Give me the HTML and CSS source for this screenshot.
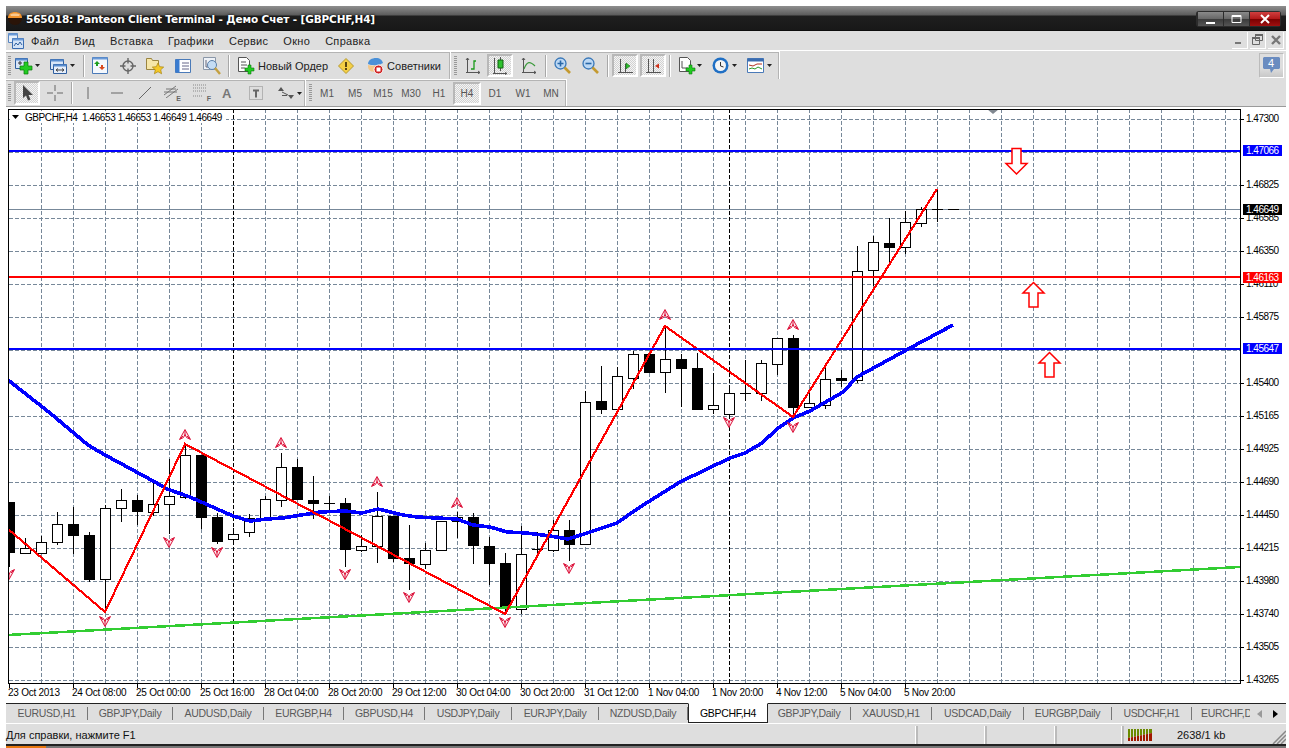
FILE: index.html
```html
<!DOCTYPE html>
<html lang="ru">
<head>
<meta charset="utf-8">
<title>565018: Panteon Client Terminal</title>
<link rel="stylesheet" href="styles.css">
</head>
<body>
<div class="window">
  <header class="titlebar">
    <svg class="appicon" width="16" height="16" viewBox="0 0 16 16"><path d="M1 7C1 3 4 1 8 1s7 2 7 6z" fill="#f0922c"/><path d="M3 3.500C5 2 11 2 13 3.500L12 5H4z" fill="#f8c890"/><path d="M1 7h14c0 4-3 7-7 7s-7-3-7-7z" fill="#2a1408"/></svg>
    <span class="titletext">565018: Panteon Client Terminal - Демо Счет - [GBPCHF,H4]</span>
    <div class="winctl">
      <span class="wbtn"><svg width="25" height="14" viewBox="0 0 25 14"><path d="M8 10h9v2H8z" fill="#fff"/></svg></span>
      <span class="wbtn"><svg width="25" height="14" viewBox="0 0 25 14"><path d="M8 3.500h9v7H8z" fill="none" stroke="#fff"/><path d="M8 3h9v2H8z" fill="#fff"/></svg></span>
      <span class="wbtn wclose"><svg width="30" height="14" viewBox="0 0 30 14"><path d="M11 3l8 8M19 3l-8 8" stroke="#fff" stroke-width="2"/></svg></span>
    </div>
  </header>

  <nav class="menubar">
    <svg class="menuicon" width="16" height="16" viewBox="0 0 16 16"><path d="M.5.500h9v9h-9z" fill="#e8f0fa" stroke="#5a86c0"/><path d="M4.500 5.500h11v10h-11z" fill="#d2e2f6" stroke="#3a6cb0"/><path d="M.5.500h9v2h-9zM4.500 5.500h11v2h-11z" fill="#6a9ad8"/><path d="M6 13l2-3 2 2 2-3 2 3" fill="none" stroke="#2f5f9f"/></svg>
    <span class="menuitem">Файл</span>
    <span class="menuitem">Вид</span>
    <span class="menuitem">Вставка</span>
    <span class="menuitem">Графики</span>
    <span class="menuitem">Сервис</span>
    <span class="menuitem">Окно</span>
    <span class="menuitem">Справка</span>
    <div class="mdi">
      <span class="mdibtn"><svg width="14" height="14" viewBox="0 0 14 14"><path d="M2 9h6v2H2z" fill="#777"/></svg></span>
      <span class="mdibtn"><svg width="14" height="14" viewBox="0 0 14 14"><path d="M4.500 1.500h7v6h-7zM1.500 4.500h7v7h-7z" fill="#dedede" stroke="#666"/><path d="M4 1h8v2H4zM1 4h8v2H1z" fill="#666"/></svg></span>
      <span class="mdibtn"><svg width="14" height="14" viewBox="0 0 14 14"><path d="M3 3l8 8M11 3l-8 8" stroke="#777" stroke-width="2.400"/></svg></span>
    </div>
  </nav>

  <div class="toolrow row1">
    <div class="band band1">
      <span class="grip"></span>
      <svg class="m4" width="18" height="18" viewBox="0 0 18 18"><path d="M.5 1.500h12v10H.5z" fill="#d8e6f8" stroke="#2f5f9f"/><path d="M.5 1.500h12v2H.5z" fill="#5a8ed0"/><path d="M3 6h4M5 4v4" stroke="#333"/><path d="M9 5h4v4h4v4h-4v4H9v-4H5V9h4z" fill="#22cc22" stroke="#0a7a0a" stroke-width=".7"/></svg>
      <svg class="m2 caret" width="5" height="3" viewBox="0 0 5 3"><path d="M0 0h5L2.500 3z"/></svg>
      <svg class="m10" width="17" height="18" viewBox="0 0 17 18"><path d="M.5 2.500h13v10H.5z" fill="#d8e6f8" stroke="#2f5f9f"/><path d="M.5 2.500h13v2H.5z" fill="#5a8ed0"/><path d="M3.500 7.500h13v9h-13z" fill="#e6eefa" stroke="#2f5f9f"/><path d="M3.500 7.500h13v2h-13z" fill="#5a8ed0"/><path d="M6 13h8M6 13l2-1.500M6 13l2 1.500M14 13l-2-1.500M14 13l-2 1.500" stroke="#444" fill="none"/></svg>
      <svg class="m3 caret" width="5" height="3" viewBox="0 0 5 3"><path d="M0 0h5L2.500 3z"/></svg>
      <span class="sep m8"></span>
      <svg class="m8" width="16" height="17" viewBox="0 0 16 17"><path d="M.5.500h15v16H.5z" fill="#f4f8fd" stroke="#4a7ab8"/><path d="M.5.500h15v2H.5z" fill="#6a9ad8"/><path d="M5 4l3 3H6v2H4V7H2z" fill="#1e9e1e"/><path d="M10 13l-3-3h2V8h2v2h2z" fill="#d84a20"/></svg>
      <svg class="m12" width="16" height="16" viewBox="0 0 16 16"><circle cx="8" cy="8" r="5" fill="none" stroke="#666" stroke-width="1.400"/><path d="M8 0v5.500M8 10.500V16M0 8h5.500M10.500 8H16" stroke="#666" stroke-width="1.400"/></svg>
      <svg class="m10" width="18" height="18" viewBox="0 0 18 18"><path d="M.5 1.500h5l1 2h6v9h-12z" fill="#f6e6a8" stroke="#9a8440"/><path d="M12 6l1.700 3.700 4 .4-3 2.700.9 4-3.600-2.100-3.600 2.100.9-4-3-2.700 4-.4z" fill="#f4c828" stroke="#a88410" stroke-width=".7"/></svg>
      <svg class="m11" width="16" height="16" viewBox="0 0 16 16"><path d="M.5 1.500h15v13H.5z" fill="#fff" stroke="#4a7ab8"/><path d="M.5 1.500h4v13h-4z" fill="#3a7cd0"/><path d="M7 5h7M7 8h7M7 11h7" stroke="#668"/></svg>
      <svg class="m12" width="18" height="18" viewBox="0 0 18 18"><path d="M.5.500h12v12H.5z" fill="#eef2f8" stroke="#8a97a8"/><path d="M3 3v7h7" stroke="#667" fill="none"/><circle cx="9" cy="8" r="4.500" fill="#c4dcf4" stroke="#5a7fa8"/><path d="M12 11l5 6" stroke="#c4a040" stroke-width="2.400"/></svg>
      <span class="sep m7"></span>
      <svg class="m9" width="17" height="18" viewBox="0 0 17 18"><path d="M.5.500h8l3 3v11H.5z" fill="#fff" stroke="#555"/><path d="M3 5h5M3 8h6M3 11h4" stroke="#555"/><path d="M10 8h3v3h3v3h-3v3h-3v-3H7v-3h3z" fill="#22cc22" stroke="#0a7a0a" stroke-width=".6"/></svg>
      <span class="tbtext m3">Новый Ордер</span>
      <svg class="m10" width="16" height="16" viewBox="0 0 16 16"><path d="M8 .5L15.500 8 8 15.500.5 8z" fill="#f5cf45" stroke="#b59a30"/><path d="M7 4h2v5H7zM7 10h2v2H7z" fill="#5a4510"/></svg>
      <svg class="m11" width="19" height="18" viewBox="0 0 19 18"><path d="M3 7c0-4 4-6 8-6s6 2 7 5l-3 1.500c-3 1-9 1-12-.5z" fill="#4a90d8"/><path d="M3 8c3 1 9 1 12-.5l1 3c-2 6-12 6-13-.5z" fill="#f3c78a"/><circle cx="13.500" cy="12.500" r="4.500" fill="#d02020" stroke="#fff"/><path d="M11.500 10.500h4v4h-4z" fill="#fff"/></svg>
      <span class="tbtext m3">Советники</span>
    </div>
    <div class="band band2">
      <span class="grip"></span>
      <svg class="m8" width="16" height="17" viewBox="0 0 16 17"><path d="M2.500 1v14M1 15.500h14M1 3l1.500-2L4 3M13 14l2 1.500-2 1.500" stroke="#555" fill="none"/><path d="M6 12h3V4h2" stroke="#1a9a1a" stroke-width="1.300" fill="none"/></svg>
      <span class="pressed m6 w26"><svg width="14" height="18" viewBox="0 0 14 18"><path d="M1.500 1v15M0 16.500h14M12 15.500l2 1-2 1" stroke="#555" fill="none"/><path d="M7.500 0v14" stroke="#555"/><path d="M5 3h5v8H5z" fill="#2ec22e" stroke="#106010"/></svg></span>
      <svg class="m8" width="16" height="17" viewBox="0 0 16 17"><path d="M2.500 1v14M1 15.500h14M1 3l1.500-2L4 3M13 14l2 1.500-2 1.500" stroke="#555" fill="none"/><path d="M3 12c3-8 6-8 11-3" stroke="#3a9a3a" stroke-width="1.200" fill="none"/></svg>
      <span class="sep m8"></span>
      <svg class="m8" width="17" height="17" viewBox="0 0 17 17"><circle cx="6.500" cy="6.500" r="5.500" fill="#bcd8f4" stroke="#3a78b8" stroke-width="1.300"/><path d="M3.500 6.500h6M6.500 3.500v6" stroke="#2868a8" stroke-width="1.600"/><path d="M10.500 10.500l5.500 5.500" stroke="#c49a30" stroke-width="2.600"/></svg>
      <svg class="m11" width="17" height="17" viewBox="0 0 17 17"><circle cx="6.500" cy="6.500" r="5.500" fill="#bcd8f4" stroke="#3a78b8" stroke-width="1.300"/><path d="M3.500 6.500h6" stroke="#2868a8" stroke-width="1.600"/><path d="M10.500 10.500l5.500 5.500" stroke="#c49a30" stroke-width="2.600"/></svg>
      <span class="sep m8"></span>
      <span class="pressed m4 w26"><svg width="15" height="16" viewBox="0 0 15 16"><path d="M2.500 1v13M0 14.500h15M7.500 6v8" stroke="#555" fill="none"/><path d="M8 5l4 3-4 3z" fill="#2ec22e" stroke="#107010" stroke-width=".6"/></svg></span>
      <span class="pressed m2 w26"><svg width="15" height="16" viewBox="0 0 15 16"><path d="M2.500 1v13M0 14.500h15M7.500 1v13" stroke="#555" fill="none"/><path d="M9 8l4-2.500v5z" fill="#d03018"/></svg></span>
      <span class="sep m3"></span>
      <svg class="m9" width="17" height="18" viewBox="0 0 17 18"><path d="M.5.500h8l3 3v11H.5z" fill="#fff" stroke="#555"/><path d="M3 4v7h6" stroke="#555" fill="none"/><path d="M10 8h3v3h3v3h-3v3h-3v-3H7v-3h3z" fill="#22cc22" stroke="#0a7a0a" stroke-width=".6"/></svg>
      <svg class="m1 caret" width="5" height="3" viewBox="0 0 5 3"><path d="M0 0h5L2.500 3z"/></svg>
      <svg class="m10" width="17" height="17" viewBox="0 0 17 17"><circle cx="8.500" cy="8.500" r="8" fill="#1f6fc4"/><circle cx="8.500" cy="8.500" r="5.500" fill="#f4f4f4"/><path d="M8.500 5v4l3 1" stroke="#333" fill="none"/></svg>
      <svg class="m3 caret" width="5" height="3" viewBox="0 0 5 3"><path d="M0 0h5L2.500 3z"/></svg>
      <svg class="m10" width="17" height="15" viewBox="0 0 17 15"><path d="M.5.500h16v14H.5z" fill="#fff" stroke="#4a7ab8"/><path d="M.5.500h16v3H.5z" fill="#3a6cb0"/><path d="M2 7l4 1 4-2 5 0" stroke="#b03020" fill="none"/><path d="M2 11l3-1 3 1 3-2 4 2" stroke="#2a9a2a" fill="none"/></svg>
      <svg class="m3 caret" width="5" height="3" viewBox="0 0 5 3"><path d="M0 0h5L2.500 3z"/></svg>
    </div>
    <span class="notify"><svg width="17" height="17" viewBox="0 0 17 17"><path d="M1 0h15l1 1v10l-1 1h-5l-3 4-1-4H1l-1-1V1z" fill="#6a8cc0"/></svg><b class="notifynum">4</b></span>
  </div>

  <div class="toolrow row2">
    <div class="band band3">
      <span class="grip small"></span>
      <span class="pressed m3 w26 h26"><svg width="11" height="16" viewBox="0 0 11 16"><path d="M1 0v13l3-2.500 2 5 2.500-1-2-4.500H11z" fill="#444"/></svg></span>
      <svg class="m7" width="16" height="16" viewBox="0 0 16 16"><path d="M8 0v6M8 10v6M0 8h6M10 8h6" stroke="#666"/></svg>
      <span class="sep m8"></span>
      <svg class="m11" width="10" height="14" viewBox="0 0 10 14"><path d="M5 1v12" stroke="#666"/></svg>
      <svg class="m17" width="14" height="4" viewBox="0 0 14 4"><path d="M1 2h12" stroke="#666"/></svg>
      <svg class="m14" width="14" height="14" viewBox="0 0 14 14"><path d="M1 13L13 1" stroke="#666"/></svg>
      <span class="drawtool m11"><svg width="16" height="14" viewBox="0 0 16 14"><path d="M1 11l12-9M3 14l12-9M1 8h13M3 5h10" stroke="#777" fill="none"/></svg><i class="sub">E</i></span>
      <span class="drawtool m12"><svg width="14" height="14" viewBox="0 0 14 14"><path d="M0 1h14M0 4h14M0 7h14M0 12h9" stroke="#888" stroke-dasharray="1 1"/></svg><i class="sub">F</i></span>
      <span class="glyph m11">A</span>
      <svg class="m16" width="14" height="14" viewBox="0 0 14 14"><path d="M.5.500h13v13H.5z" fill="none" stroke="#888" stroke-dasharray="1 1"/><path d="M4 3.500h6v2H8v6H6v-6H4z" fill="#666"/></svg>
      <svg class="m14" width="18" height="14" viewBox="0 0 18 14"><path d="M1 5l3-4 3 4zM5 9h5v1H5zM11 9l3 4 3-4z" fill="#555"/><path d="M5 6l6 3" stroke="#555"/></svg>
      <svg class="m2 caret" width="5" height="3" viewBox="0 0 5 3"><path d="M0 0h5L2.500 3z"/></svg>
    </div>
    <div class="band band4">
      <span class="grip small"></span>
      <span class="tf">M1</span><span class="tf">M5</span><span class="tf">M15</span><span class="tf">M30</span><span class="tf">H1</span><span class="tf active">H4</span><span class="tf">D1</span><span class="tf">W1</span><span class="tf">MN</span>
    </div>
  </div>
  <div class="toolend"></div>

  <main class="chartarea">
    <svg class="chart" width="1280" height="596" viewBox="6 107 1280 596">
      <defs>
        <clipPath id="plot"><rect x="9" y="109" width="1231" height="574"/></clipPath>
        <symbol id="fup" viewBox="-7 -7 14 14" overflow="visible"><path d="M0-5.500L5.500 4.500 1.500 2.500 0-.5-1.500 2.500-5.500 4.500Z" fill="#fde8ec" stroke="#dc143c"/><path d="M0-5V0M-2 1l-3 3M2 1l3 3" stroke="#dc143c" fill="none"/></symbol>
        <symbol id="fdn" viewBox="-7 -7 14 14" overflow="visible"><path d="M0 5.500L5.500-4.500 1.500-2.500 0 .5-1.500-2.500-5.500-4.500Z" fill="#fde8ec" stroke="#dc143c"/><path d="M0 5V0M-2-1l-3-3M2-1l3-3" stroke="#dc143c" fill="none"/></symbol>
      </defs>
      <g clip-path="url(#plot)">
        <path class="grid" d="M9 119.500H1240M9 152.500H1240M9 185.500H1240M9 218.500H1240M9 251.500H1240M9 284.500H1240M9 317.500H1240M9 350.500H1240M9 383.500H1240M9 416.500H1240M9 449.500H1240M9 482.500H1240M9 515.500H1240M9 548.500H1240M9 581.500H1240M9 614.500H1240M9 647.500H1240M9 680.500H1240"/>
        <path class="grid" d="M41.500 109V683M73.500 109V683M105.500 109V683M137.500 109V683M169.500 109V683M201.500 109V683M265.500 109V683M297.500 109V683M329.500 109V683M361.500 109V683M393.500 109V683M425.500 109V683M457.500 109V683M489.500 109V683M521.500 109V683M553.500 109V683M585.500 109V683M617.500 109V683M649.500 109V683M681.500 109V683M713.500 109V683M745.500 109V683M777.500 109V683M809.500 109V683M841.500 109V683M873.500 109V683M905.500 109V683M937.500 109V683M969.500 109V683M1001.500 109V683M1033.500 109V683M1065.500 109V683M1097.500 109V683M1129.500 109V683M1161.500 109V683M1193.500 109V683M1225.500 109V683"/>
        <path class="sepline" d="M233.500 109V683M729.500 109V683"/>
        <path class="priceline" d="M9 209.500H1240"/>
        <path class="wick" d="M9.500 502V567M25.500 538V554M41.500 536V553M57.500 512V545M73.500 507V554M89.500 532V582M105.500 505V612M121.500 489V522M137.500 495V525M153.500 482V516M169.500 459V534M185.500 445V499M201.500 455V529M217.500 513V544M233.500 528V543M249.500 514V537M265.500 496V519M281.500 453V507M297.500 459V500M313.500 476V519M329.500 496V510M324 503.500H335M345.500 498V567M361.500 535V552M377.500 492V563M393.500 516V562M409.500 525V590M425.500 543V569M441.500 521V551M457.500 512V538M473.500 513V564M489.500 537V585M505.500 553V613M521.500 526V614M537.500 532V553M532 549.500H543M553.500 520V552M569.500 520V561M585.500 391V544M601.500 366V414M617.500 367V409M633.500 351V389M649.500 354V373M665.500 326V393M681.500 354V407M697.500 353V410M713.500 373V414M729.500 385V418M745.500 360V401M740 393.500H751M761.500 360V401M777.500 338V375M793.500 335V417M809.500 393V407M825.500 368V409M841.500 370V387M857.500 246V383M873.500 236V286M889.500 218V262M905.500 211V254M921.500 207V227M937.500 189V222M932 209.500H943M948 209.500H959"/>
        <path class="bodyup" d="M20.500 548.500h10v5h-10zM36.500 542.500h10v11h-10zM52.500 524.500h10v18h-10zM100.500 508.500h10v71h-10zM116.500 500.500h10v8h-10zM148.500 504.500h10v8h-10zM164.500 496.500h10v8h-10zM180.500 455.500h10v42h-10zM228.500 534.500h10v5h-10zM244.500 518.500h10v14h-10zM260.500 499.500h10v20h-10zM276.500 467.500h10v33h-10zM356.500 546.500h10v4h-10zM372.500 516.500h10v30h-10zM420.500 550.500h10v14h-10zM436.500 521.500h10v29h-10zM452.500 517.500h10v4h-10zM516.500 554.500h10v55h-10zM548.500 530.500h10v20h-10zM580.500 402.500h10v142h-10zM612.500 376.500h10v33h-10zM628.500 354.500h10v24h-10zM660.500 359.500h10v13h-10zM708.500 405.500h10v4h-10zM724.500 393.500h10v21h-10zM756.500 363.500h10v30h-10zM772.500 338.500h10v26h-10zM804.500 403.500h10v4h-10zM820.500 379.500h10v26h-10zM852.500 271.500h10v109h-10zM868.500 242.500h10v28h-10zM900.500 222.500h10v25h-10zM916.500 209.500h10v14h-10z"/>
        <path class="bodydn" d="M4 502h11v51H4zM68 524h11v12H68zM84 535h11v45H84zM132 500h11v12h-11zM196 455h11v63h-11zM212 517h11v25h-11zM292 467h11v33h-11zM308 500h11v4h-11zM340 503h11v47h-11zM388 516h11v43h-11zM404 558h11v6h-11zM468 517h11v29h-11zM484 546h11v18h-11zM500 563h11v45h-11zM564 530h11v15h-11zM596 401h11v9h-11zM644 354h11v19h-11zM676 359h11v10h-11zM692 368h11v42h-11zM788 338h11v70h-11zM836 378h11v3h-11zM884 243h11v5h-11z"/>
        <polyline class="trend" points="8,635 1240,567"/>
        <polyline class="ma" points="8,380 50,413 88,445 105,455 155,482 167,489 190,497 233,516 250,521 267,519 283,518 320,512 345,511 362,513 378,509 403,515 417,517 457,519 473,525 490,527 507,532 527,533 550,536 568,539 587,533 617,523 640,507 680,482 705,470 730,458 745,453 762,443 777,429 793,418 810,411 843,392 857,377 910,348 953,325"/>
        <polyline class="zig" points="8,529 105,612 185,444 505,614 665,326 793,417 937,189"/>
        <path class="hblue" d="M9 151H1240M9 349H1240"/>
        <path class="hred" d="M9 277H1240"/>
        <path class="bigarrow" d="M1012 148.500h9v15h6l-10.500 10.500L1006 163.500h6z"/>
        <path class="bigarrow" d="M1033.500 282.500l10.500 10.500h-6v14h-9v-14h-6z"/>
        <path class="bigarrow" d="M1049.500 352.500l10.500 10.500h-6v14h-9v-14h-6z"/>
        <use href="#fup" x="178" y="428" width="14" height="14"/><use href="#fup" x="274" y="436" width="14" height="14"/><use href="#fup" x="370" y="475" width="14" height="14"/><use href="#fup" x="450" y="496" width="14" height="14"/><use href="#fup" x="658" y="308" width="14" height="14"/><use href="#fup" x="786" y="318" width="14" height="14"/>
        <use href="#fdn" x="2" y="567" width="14" height="14"/><use href="#fdn" x="98" y="614" width="14" height="14"/><use href="#fdn" x="162" y="535" width="14" height="14"/><use href="#fdn" x="210" y="545" width="14" height="14"/><use href="#fdn" x="338" y="567" width="14" height="14"/><use href="#fdn" x="402" y="590" width="14" height="14"/><use href="#fdn" x="498" y="615" width="14" height="14"/><use href="#fdn" x="562" y="561" width="14" height="14"/><use href="#fdn" x="722" y="415" width="14" height="14"/><use href="#fdn" x="786" y="420" width="14" height="14"/>
        <path class="marker" d="M987 109h12l-6 5z"/>
      </g>
      <rect class="headbg" x="10" y="111" width="216" height="12"/>
      <path d="M12 115h7l-3.500 4z" fill="#000"/>
      <text class="lab head" x="25" y="121">GBPCHF,H4&#160; 1.46653 1.46653 1.46649 1.46649</text>
      <path class="frame" d="M8.500 109.500H1240.500V683.500H8.500z"/>
      <path class="tick" d="M1241 119.500h3M1241 185.500h3M1241 218.500h3M1241 251.500h3M1241 284.500h3M1241 317.500h3M1241 383.500h3M1241 416.500h3M1241 449.500h3M1241 482.500h3M1241 515.500h3M1241 548.500h3M1241 581.500h3M1241 614.500h3M1241 647.500h3M1241 680.500h3M9.500 684v4M73.500 684v4M137.500 684v4M201.500 684v4M265.500 684v4M329.500 684v4M393.500 684v4M457.500 684v4M521.500 684v4M585.500 684v4M649.500 684v4M713.500 684v4M777.500 684v4M841.500 684v4M905.500 684v4"/>
      <g class="lab prices">
        <text x="1246" y="122">1.47300</text><text x="1246" y="188">1.46825</text><text x="1246" y="221">1.46585</text><text x="1246" y="254">1.46350</text><text x="1246" y="287">1.46110</text><text x="1246" y="320">1.45875</text><text x="1246" y="386">1.45400</text><text x="1246" y="419">1.45165</text><text x="1246" y="452">1.44925</text><text x="1246" y="485">1.44690</text><text x="1246" y="518">1.44450</text><text x="1246" y="551">1.44215</text><text x="1246" y="584">1.43980</text><text x="1246" y="617">1.43740</text><text x="1246" y="650">1.43505</text><text x="1246" y="683">1.43265</text>
      </g>
      <g class="lab dates">
        <text x="8" y="696">23 Oct 2013</text><text x="72" y="696">24 Oct 08:00</text><text x="136" y="696">25 Oct 00:00</text><text x="200" y="696">25 Oct 16:00</text><text x="264" y="696">28 Oct 04:00</text><text x="328" y="696">28 Oct 20:00</text><text x="392" y="696">29 Oct 12:00</text><text x="456" y="696">30 Oct 04:00</text><text x="520" y="696">30 Oct 20:00</text><text x="584" y="696">31 Oct 12:00</text><text x="648" y="696">1 Nov 04:00</text><text x="712" y="696">1 Nov 20:00</text><text x="776" y="696">4 Nov 12:00</text><text x="840" y="696">5 Nov 04:00</text><text x="904" y="696">5 Nov 20:00</text>
      </g>
      <rect class="tagblue" x="1243" y="145" width="39" height="11"/><rect class="tagblack" x="1243" y="204" width="39" height="11"/><rect class="tagred" x="1243" y="272" width="39" height="11"/><rect class="tagblue" x="1243" y="343" width="39" height="11"/>
      <g class="tagtext prices">
        <text x="1246" y="154">1.47066</text><text x="1246" y="213">1.46649</text><text x="1246" y="281">1.46163</text><text x="1246" y="352">1.45647</text>
      </g>
    </svg>
  </main>

  <div class="tabs">
    <span class="tab">EURUSD,H1</span><span class="tab">GBPJPY,Daily</span><span class="tab">AUDUSD,Daily</span><span class="tab">EURGBP,H4</span><span class="tab">GBPUSD,H4</span><span class="tab">USDJPY,Daily</span><span class="tab">EURJPY,Daily</span><span class="tab">NZDUSD,Daily</span><span class="tab current">GBPCHF,H4</span><span class="tab">GBPJPY,Daily</span><span class="tab">XAUUSD,H1</span><span class="tab">USDCAD,Daily</span><span class="tab">EURGBP,Daily</span><span class="tab">USDCHF,H1</span><span class="tab last">EURCHF,Daily</span>
    <span class="tabnav"><svg width="5" height="8" viewBox="0 0 5 8"><path d="M5 0v8L0 4z" fill="#999"/></svg><svg width="5" height="8" viewBox="0 0 5 8"><path d="M0 0v8l5-4z" fill="#000"/></svg></span>
  </div>

  <footer class="status">
    <span class="cell">Для справки, нажмите F1</span>
    <span class="cell"></span><span class="cell"></span><span class="cell"></span>
    <span class="cell conn"><svg width="24" height="12" viewBox="0 0 24 12"><path d="M0 0h24v4L0 9z" fill="#6a8a00"/><path d="M0 9L24 4v8H0z" fill="#a01800"/><path d="M2.500 0v12M5.500 0v12M8.500 0v12M11.500 0v12M14.500 0v12M17.500 0v12M20.500 0v12" stroke="#dedede"/></svg></span>
    <span class="cell traffic">2638/1 kb</span>
    <svg class="sizegrip" width="15" height="15" viewBox="0 0 15 15"><path d="M15 2L2 15M15 6L6 15M15 10L10 15" stroke="#888" stroke-width="1.500"/></svg>
  </footer>
  <div class="edge"><span class="edgeglow"></span></div>
</div>
</body>
</html>
```
FILE: styles.css
```css
* { box-sizing: border-box; }
html, body { margin: 0; padding: 0; background: #fff; }
body { width: 1289px; height: 748px; overflow: hidden; font-family: "Liberation Sans", Arial, sans-serif; font-size: 11px; color: #222; }
.window { display: flex; flex-direction: column; width: 1280px; height: 742px; margin: 6px 0 0 6px; background: #dedede; }

.titlebar { display: flex; align-items: center; height: 25px; flex: none; padding-left: 1px; background: linear-gradient(#8e8e8e 0, #5c5c5c 9px, #1f1f1f 10px, #181818 24px, #000 25px); }
.appicon { flex: none; }
.titletext { margin-left: 3px; color: #fff; font-family: "DejaVu Sans", sans-serif; font-weight: 700; font-size: 10.500px; letter-spacing: -.13px; text-shadow: 0 0 3px #000; white-space: nowrap; }
.winctl { display: flex; margin-left: auto; margin-right: 5px; padding: 1px; background: #2c2c2c; border-radius: 3px; }
.wbtn { display: block; height: 14px; margin-left: 1px; background: linear-gradient(#8a8a8a, #666 50%, #3a3a3a 50%, #555); }
.wbtn svg { display: block; }
.wclose { background: linear-gradient(#d04040, #b01818 50%, #7a0000 50%, #a01010); }

.menubar { display: flex; align-items: center; height: 20px; flex: none; padding-left: 2px; border-bottom: 1px solid #fff; }
.menuitem { margin-left: 15px; font-size: 11px; letter-spacing: .3px; white-space: nowrap; }
.menuicon + .menuitem { margin-left: 7px; }
.mdi { display: flex; gap: 2px; margin-left: auto; margin-right: 2px; height: 18px; }
.mdibtn { display: flex; align-items: center; justify-content: center; width: 16px; height: 17px; border-right: 1px solid #fff; border-bottom: 1px solid #fff; }

.toolrow { display: flex; flex: none; align-items: stretch; }
.row1 { height: 28px; }
.row2 { height: 27px; }
.band { display: flex; align-items: center; border-top: 1px solid #fff; border-right: 1px solid #fff; box-shadow: inset 0 1px 0 #b4b4b4, inset -1px 0 0 #b4b4b4; }
.band1 { width: 445px; padding-left: 2px; }
.band2 { width: 329px; padding-left: 3px; }
.band3 { width: 300px; padding-left: 2px; }
.band4 { width: 261px; padding-left: 3px; }
.band svg { flex: none; }
.grip { flex: none; width: 3px; height: 20px; background: repeating-linear-gradient(#999 0 1px, #dedede 1px 2px); }
.grip.small { height: 18px; }
.sep { flex: none; width: 1px; height: 22px; background: #a8a8a8; box-shadow: 1px 0 0 #fff; }
.m1 { margin-left: 1px; } .m2 { margin-left: 2px; } .m3 { margin-left: 3px; } .m4 { margin-left: 4px; } .m6 { margin-left: 6px; } .m7 { margin-left: 7px; } .m8 { margin-left: 8px; } .m9 { margin-left: 9px; } .m10 { margin-left: 10px; } .m11 { margin-left: 11px; } .m12 { margin-left: 12px; } .m14 { margin-left: 14px; } .m16 { margin-left: 16px; } .m17 { margin-left: 17px; }
.caret path { fill: #222; }
.tbtext { font-size: 11px; color: #222; white-space: nowrap; }
.pressed { display: flex; align-items: center; justify-content: center; flex: none; height: 23px; border: 2px solid; border-color: #b8b8b8 #fff #fff #b8b8b8; background: repeating-conic-gradient(#f4f4f4 0 25%, #d2d2d2 0 50%) 0 0 / 2px 2px; }
.w26 { width: 26px; }
.h26 { height: 24px; }
.notify { position: relative; display: flex; align-items: center; justify-content: center; width: 25px; height: 25px; margin: 2px 2px 0 auto; border: 1px solid #fff; border-left-color: #bbb; border-top-color: #bbb; background: linear-gradient(#dedede 60%, #c8c8c8); }
.notifynum { position: absolute; top: 3px; left: 8px; color: #fff; font-weight: 400; font-size: 11px; }

.drawtool { position: relative; display: block; flex: none; height: 18px; width: 18px; }
.sub { position: absolute; right: 0; bottom: 0; font: 700 7px "Liberation Sans", sans-serif; color: #666; }
.glyph { flex: none; font-weight: 700; font-size: 13px; color: #777; width: 11px; }
.tf { flex: none; width: 28px; text-align: center; font-size: 10px; color: #555; }
.band4 .grip + .tf { margin-left: 1px; }
.tf.active { height: 23px; line-height: 19px; border: 2px solid; border-color: #b8b8b8 #fff #fff #b8b8b8; background: repeating-conic-gradient(#f4f4f4 0 25%, #d2d2d2 0 50%) 0 0 / 2px 2px; }

.toolend { flex: none; height: 1px; background: #9a9a9a; }
.chartarea { flex: none; height: 596px; background: #fff; }
.chart { display: block; }
.chart text { font-family: "Liberation Sans", Arial, sans-serif; font-size: 10px; fill: #000; }
.chart .head { letter-spacing: -.42px; }
.chart .prices text { letter-spacing: -.5px; }
.chart .dates text { letter-spacing: -.25px; }
.grid { fill: none; stroke: #778899; stroke-width: 1; stroke-dasharray: 4 2; shape-rendering: crispEdges; }
.sepline { fill: none; stroke: #000; stroke-width: 1; stroke-dasharray: 4 2; shape-rendering: crispEdges; }
.priceline { fill: none; stroke: #778899; stroke-width: 1; shape-rendering: crispEdges; }
.wick { fill: none; stroke: #000; stroke-width: 1; shape-rendering: crispEdges; }
.bodyup { fill: #fff; stroke: #000; stroke-width: 1; shape-rendering: crispEdges; }
.bodydn { fill: #000; shape-rendering: crispEdges; }
.trend { fill: none; stroke: #32cd32; stroke-width: 2.500; shape-rendering: crispEdges; }
.ma { fill: none; stroke: #0000ff; stroke-width: 3.600; shape-rendering: crispEdges; }
.zig { fill: none; stroke: #ff0000; stroke-width: 2.200; shape-rendering: crispEdges; }
.hblue { fill: none; stroke: #0000ff; stroke-width: 2; shape-rendering: crispEdges; }
.hred { fill: none; stroke: #ff0000; stroke-width: 2; shape-rendering: crispEdges; }
.bigarrow { fill: #fff; stroke: #ff0000; stroke-width: 1.500; }
.marker { fill: #808890; }
.headbg { fill: #fff; }
.frame { fill: none; stroke: #000; stroke-width: 1; shape-rendering: crispEdges; }
.tick { fill: none; stroke: #000; stroke-width: 1; shape-rendering: crispEdges; }
.tagblue { fill: #0000ff; } .tagblack { fill: #000; } .tagred { fill: #ff0000; }
.chart .tagtext text { fill: #fff; }

.tabs { display: grid; grid-template-columns: 82px 85px 91px 80px 81px 87px 87px 89px 80px 83px 81px 92px 88px 80px 58px 1fr; flex: none; height: 20px; align-items: center; border-top: 1px solid #222; }
.tab { height: 13px; line-height: 13px; overflow: hidden; text-align: center; font-size: 10.500px; letter-spacing: -.3px; color: #5a5a5a; border-right: 1px solid #777; white-space: nowrap; }
.tab.current { height: 20px; line-height: 18px; margin-top: -1px; color: #000; background: #fff; border: 1px solid #222; border-top-color: #fff; }
.tab.last { border-right: 0; text-align: left; padding-left: 9px; }
.tabnav { display: flex; align-items: center; gap: 11px; padding-left: 7px; }
.tabnav svg { display: block; }

.status { position: relative; display: grid; grid-template-columns: 912px 69px 70px 67px 53px 60px; flex: none; height: 21px; padding-top: 2px; align-items: center; border-top: 1px solid #fff; }
.cell { height: 18px; line-height: 18px; font-size: 11px; color: #111; border-right: 2px solid #bbb; box-shadow: inset -1px 0 0 #fff; white-space: nowrap; }
.conn { display: flex; align-items: center; padding-left: 4px; border-right: 0; box-shadow: none; }
.traffic { border-right: 0; box-shadow: none; }
.sizegrip { position: absolute; right: 0; bottom: 0; }
.edge { flex: 1; background: linear-gradient(#222 0 2px, #777 2px); }
.edgeglow { display: block; width: 40px; height: 100%; background: linear-gradient(#222 0 2px, #e87810 2px); }
```
